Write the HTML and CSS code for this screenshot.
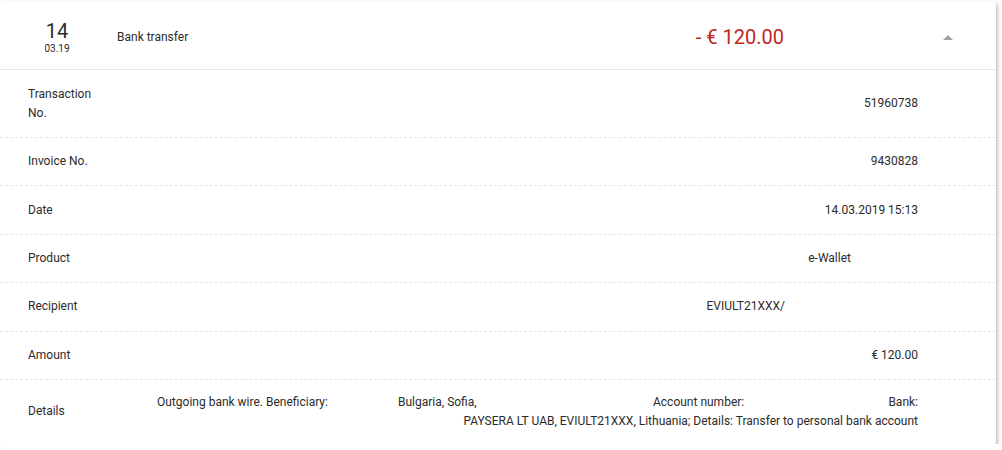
FILE: index.html
```html
<!DOCTYPE html>
<html>
<head>
<meta name="viewport" content="width=device-width, initial-scale=1">
<link rel="stylesheet" href="styles.css">
</head>
<body>

<div class="card">
  <div class="head">
    <div class="date">
      <div class="day">14</div>
      <div class="month">03.19</div>
    </div>
    <div class="title">Bank transfer</div>
    <div class="sum">- € 120.00</div>
    <div class="toggle"><span class="arrow"></span></div>
  </div>

  <div class="row first">
    <div class="label">Transaction No.</div>
    <div class="value">51960738</div>
  </div>
  <div class="row">
    <div class="label">Invoice No.</div>
    <div class="value">9430828</div>
  </div>
  <div class="row">
    <div class="label">Date</div>
    <div class="value">14.03.2019 15:13</div>
  </div>
  <div class="row">
    <div class="label">Product</div>
    <div class="value"><span class="push-sm">e-Wallet</span></div>
  </div>
  <div class="row">
    <div class="label">Recipient</div>
    <div class="value"><span class="push-lg">EVIULT21XXX/</span></div>
  </div>
  <div class="row">
    <div class="label">Amount</div>
    <div class="value">€ 120.00</div>
  </div>
  <div class="row details">
    <div class="label">Details</div>
    <div class="value">
      <div class="parts">
        <span>Outgoing bank wire. Beneficiary:</span>
        <span>Bulgaria, Sofia,</span>
        <span>Account number:</span>
        <span>Bank:</span>
      </div>
      <div>PAYSERA LT UAB, EVIULT21XXX, Lithuania; Details: Transfer to personal bank account</div>
    </div>
  </div>
</div>

</body>
</html>
```

FILE: styles.css
```css
body {
  font-family: Roboto, "Liberation Sans", Arial, sans-serif;
  margin: 0;
  background-color: #fff;
  color: #2b2b2b;
}

.card {
  width: 996px;
  margin-top: 2px;
  background: #fff;
  border-radius: 2px;
  box-shadow: 1px 2px 4px rgba(0, 0, 0, 0.35);
}

.head {
  display: flex;
  align-items: center;
  height: 64px;
  padding-top: 3px;
  border-bottom: 1px solid #e6e6e6;
  padding-left: 28px;
}

.date {
  width: 58px;
  text-align: center;
}

.day {
  font-size: 20px;
  line-height: 22px;
}

.month {
  font-size: 10px;
  line-height: 13px;
}

.title {
  flex: 1;
  margin-left: 31px;
  font-size: 12px;
}

.sum {
  color: #c0281c;
  font-size: 20px;
}

.toggle {
  width: 12px;
  margin-left: 158px;
  margin-right: 42px;
  display: flex;
  justify-content: center;
}

.arrow {
  width: 0;
  height: 0;
  border-left: 5px solid transparent;
  border-right: 5px solid transparent;
  border-bottom: 5px solid #a0a0a0;
}

.row {
  display: flex;
  align-items: center;
  padding: 14.2px 78px 14.2px 28px;
  border-top: 1px dashed #e4e4e4;
  font-size: 12px;
  line-height: 19px;
}

.row.first {
  border-top: none;
  padding-top: 14.5px;
  padding-bottom: 14.5px;
}

.label {
  width: 70px;
}

.value {
  flex: 1;
  text-align: right;
}

.push-sm {
  margin-right: 67px;
}

.push-lg {
  margin-right: 133px;
}

.details {
  padding-top: 13px;
  padding-bottom: 13px;
}

.details .label {
  width: 129px;
}

.parts {
  display: grid;
  grid-template-columns: 241px 255px 1fr auto;
  text-align: left;
}
```
